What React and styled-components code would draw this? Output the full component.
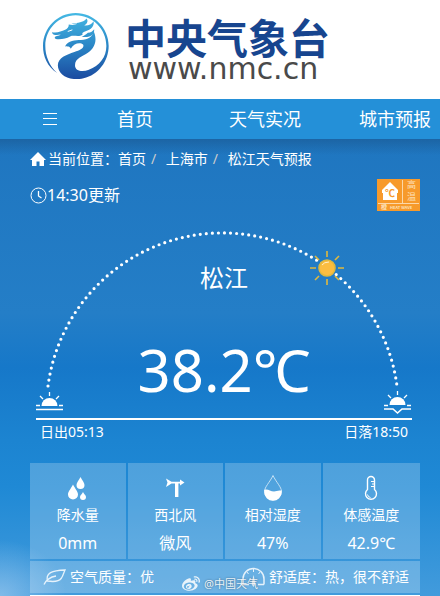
import React from "react";
import styled, { createGlobalStyle } from "styled-components";
import { FaWeibo } from "react-icons/fa";

const crumbs = ["首页", "上海市", "松江天气预报"];
const links = ["首页", "天气实况", "城市预报"];

const stats = [
  { label: "降水量", value: "0mm", icon: <DropsIcon /> },
  { label: "西北风", value: "微风", icon: <VaneIcon /> },
  { label: "相对湿度", value: "47%", icon: <HumidityIcon /> },
  { label: "体感温度", value: "42.9℃", icon: <ThermometerIcon /> },
];

function App() {
  return (
    <Page>
      <GlobalStyle />
      <Header>
        <Brand href="#">
          <DragonLogo />
          <BrandText>
            <BrandName>中央气象台</BrandName>
            <BrandUrl>www.nmc.cn</BrandUrl>
          </BrandText>
        </Brand>
      </Header>
      <Nav>
        <MenuButton type="button" aria-label="菜单">
          <svg width="16" height="12" viewBox="0 0 16 12" stroke="#fff">
            <path d="M1 .5h14M1 5.500h14M1 11.500h14" />
          </svg>
        </MenuButton>
        {links.map((el) => (
          <NavLink key={el} href="#">
            {el}
          </NavLink>
        ))}
      </Nav>
      <Main>
        <Breadcrumb>
          <HomeIcon />
          <span>当前位置：</span>
          {crumbs.map((el) => (
            <Crumb key={el}>
              <a href="#">{el}</a>
            </Crumb>
          ))}
        </Breadcrumb>
        <UpdateRow>
          <Updated>
            <ClockIcon />
            14:30更新
          </Updated>
          <HeatBadge />
        </UpdateRow>
        <SunPanel>
          <SunStage>
            <SunPath />
            <Reading>
              <City>松江</City>
              <Temperature>38.2℃</Temperature>
            </Reading>
          </SunStage>
          <SunTimes>
            <span>日出05:13</span>
            <span>日落18:50</span>
          </SunTimes>
        </SunPanel>
        <Stats>
          {stats.map((el) => (
            <Stat key={el.label}>
              {el.icon}
              <StatLabel>{el.label}</StatLabel>
              <StatValue>{el.value}</StatValue>
            </Stat>
          ))}
        </Stats>
        <Comfort>
          <ComfortItem>
            <LeafIcon />
            空气质量：优
          </ComfortItem>
          <ComfortItem>
            <GaugeIcon />
            舒适度：热，很不舒适
          </ComfortItem>
        </Comfort>
        <NextPanel />
        <Watermark>
          <FaWeibo size={18} />
          @中国天气
        </Watermark>
      </Main>
    </Page>
  );
}

export default App;

function DragonLogo() {
  return (
    <svg width="66" height="66" viewBox="9 8 200 200">
      <defs>
        <linearGradient id="dragon" x1="0" y1="8" x2="0" y2="208" gradientUnits="userSpaceOnUse">
          <stop offset="0" stopColor="#45b9e4" />
          <stop offset=".5" stopColor="#2a86c6" />
          <stop offset="1" stopColor="#1b4ba0" />
        </linearGradient>
      </defs>
      <g fill="url(#dragon)">
        <path d="M52 190C22 170 9 140 9 108C9 53 53 8 108 8s100 45 100 100c0 46-32 88-76 98c-44 10-78-12-78-40c0-22 26-32 50-40c18-6 30-12 27-22c-10-8-28-4-38 12c-3-8-10-5-17-7c10-18 30-18 48-19c22-1 36-10 38-28c12 26 6 50-16 66c-18 12-40 18-40 38c0 18 22 22 42 14c32-12 53-38 53-72c0-51-42-93-93-93s-92 42-92 93c0 30 12 60 36 82z" />
        <path d="M36 66c14 4 28-2 40-7c6-3 12-8 11-16c10 2 18 2 26-3c-6 0-12 0-18-2c20 2 38-2 46-13c6 8 2 16-7 21c12 1 22-2 28-13c4 14-8 26-24 30c-8 3-12 6-9 11c-12 8-26 0-38 5c-12 6-26 10-43 8c-6-3-3-8 3-9c5-1 9-3 12-5c-12 3-26 2-27-7z" />
        <path d="M145 68c9-1 15-5 19-11c1 12-5 19-15 22c-9 3-16 2-23 1c8-3 13-7 19-12z" />
      </g>
      <path d="M84 64l14-5" stroke="#fff" strokeWidth="3" />
    </svg>
  );
}

function HomeIcon() {
  return (
    <svg width="16" height="14" viewBox="0 0 16 14" fill="#fff">
      <path d="M8 0l8 8h-2v6H9.500V9.500H6.500V14H2V8H0z" />
    </svg>
  );
}

function ClockIcon() {
  return (
    <svg width="17" height="17" viewBox="0 0 17 17" fill="none" stroke="#fff">
      <circle cx="8.500" cy="8.500" r="7.500" />
      <path d="M8.500 4v5l3 2" strokeWidth="1.300" />
    </svg>
  );
}

function HeatBadge() {
  return (
    <svg width="43" height="32" viewBox="0 0 43 32" fill="#fff" fontFamily="Noto Sans CJK SC, sans-serif">
      <rect width="43" height="32" fill="#f79a2b" />
      <path d="M13 3L5 11v3h1v7h14v-7h1v-3z" />
      <path d="M25.500 1v23M1 24.500h41" stroke="#fcd7a8" />
      <text x="8" y="18" fontSize="10" fontWeight="700" fill="#f79a2b">℃</text>
      <g fill="#fde0b8">
        <text x="30" y="9" fontSize="9">高</text>
        <text x="30" y="21" fontSize="9">温</text>
        <text x="4" y="30" fontSize="6" fontWeight="700">橙</text>
        <text x="13" y="30" fontSize="4" fontWeight="700">HEAT WAVE</text>
      </g>
    </svg>
  );
}

// dotted path of the sun between sunrise and sunset
function SunPath() {
  return (
    <svg width="100%" viewBox="0 0 376 191" fill="none" stroke="#fff">
      <path
        d="M12 159A176 176 0 0 1 361 159"
        strokeWidth="3.200"
        strokeLinecap="round"
        strokeDasharray="0 6.080"
      />
      <g strokeWidth="1.300">
        <path d="M0 182.500h27M0 178.500h4M23 178.500h4M4 169l3 3M23 169l-3 3M13.500 165v4" />
        <path d="M5.500 179a8 8 0 0 1 16 0z" fill="#fff" stroke="none" />
      </g>
      <g strokeWidth="1.300">
        <path d="M348 178.500h4M371 178.500h4M352 168l3 3M371 168l-3 3M361.500 164v4" />
        <path d="M348 182h9l4.500 4l4.500-4h9" strokeWidth="1.600" />
        <path d="M353.500 178a8 8 0 0 1 16 0z" fill="#fff" stroke="none" />
      </g>
      <g stroke="#e0b83e" strokeWidth="1.600">
        <path d="M291 24v6M291 52v6M274 41h6M302 41h6M279 29l4 4M303 29l-4 4M279 53l4-4M303 53l-4-4" />
        <circle cx="291" cy="41" r="8" fill="#fbbd40" />
        <path d="M286 38q2-3 7-3" stroke="#fff0c8" strokeWidth="1" />
      </g>
    </svg>
  );
}

function DropsIcon() {
  return (
    <svg width="24" height="26" viewBox="0 0 24 26" fill="#fff">
      <path d="M7 9.500C5 13.500 2 16.500 2 19.500a5 5 0 0 0 10 0C12 16.500 9 13.500 7 9.500z" />
      <path d="M14.500 2C13 5 10.500 7.700 10.500 10a4 4 0 0 0 8 0C18.500 7.700 16 5 14.500 2z" />
      <path d="M17 17c-1 2-3 3.500-3 5a3 3 0 0 0 6 0c0-1.500-2-3-3-5z" />
    </svg>
  );
}

function VaneIcon() {
  return (
    <svg width="24" height="26" viewBox="0 0 24 26" fill="#fff">
      <path d="M3 3.500l5.500 3.200H17V4.500l4.500 3l-4.500 3V8.500H8.500L3 12l1.500-4.500z" />
      <path d="M12 8h3.400v14H12z" />
    </svg>
  );
}

function HumidityIcon() {
  return (
    <svg width="24" height="26" viewBox="0 0 24 26">
      <path d="M12 .5C9 7 3.500 12 3.500 16.500a8.500 8.500 0 0 0 17 0C20.500 12 15 7 12 .5z" fill="none" stroke="#c3e0f5" strokeWidth="1" />
      <path d="M3.200 15c4-2 7 3 12.500 1c2-.5 3.500-.5 5-.5v1.500a8.700 8.700 0 0 1-17.500 0z" fill="#fff" />
    </svg>
  );
}

function ThermometerIcon() {
  return (
    <svg width="24" height="26" viewBox="0 0 24 26" fill="none" stroke="#fff">
      <path d="M8.500 14.500V5a3.500 3.500 0 0 1 7 0v9.500a5.500 5.500 0 1 1-7 0z" strokeWidth="1.400" />
      <path d="M12 6.500h3M13 9h2M12 11.500h3M8.500 19.500a3.500 3.500 0 0 0 3 3" />
    </svg>
  );
}

function LeafIcon() {
  return (
    <svg width="23" height="18" viewBox="0 0 23 18" fill="none" stroke="#e6f2fb" strokeWidth="1.300">
      <path d="M1 16.500c2-4 6-7.500 12-8.500" />
      <path d="M4.500 13C2.500 5 9 2.500 22 2c-1.500 3-1.500 5-3.500 8c-2.500 3.500-8 4-14 3z" />
    </svg>
  );
}

function GaugeIcon() {
  return (
    <svg width="23" height="20" viewBox="0 0 23 20" fill="none" stroke="#e6f2fb" strokeWidth="1.500">
      <path d="M1 17.500V12A10.500 10.500 0 0 1 22 12v5.500M1 17.500h6M16 17.500h6" />
      <path d="M11.500 2v3M5 5l1.500 2M18 5l-1.500 2" strokeWidth="1" />
      <path d="M11.500 8L9.500 17l2 3l2-3z" fill="#e6f2fb" stroke="none" />
    </svg>
  );
}

const GlobalStyle = createGlobalStyle`
  * {
    box-sizing: border-box;
  }
  body {
    margin: 0;
    background: #fff;
    font-family: "Noto Sans", "Noto Sans CJK SC", sans-serif;
  }
  a {
    color: inherit;
    text-decoration: none;
  }
  svg {
    display: block;
    flex-shrink: 0;
  }
`;

const Page = styled.div`
  color: #fff;
  font-size: 14px;
  line-height: 20px;
`;

const Header = styled.header`
  padding: 13px 43px 20px;
  background: #fff;
`;

const Brand = styled.a`
  display: flex;
  align-items: flex-start;
  gap: 16px;
`;

const BrandText = styled.div`
  display: flex;
  flex-direction: column;
  padding-top: 4px;
  white-space: nowrap;
`;

const BrandName = styled.h1`
  margin: 0;
  font-size: 41px;
  font-weight: 700;
  line-height: 42px;
  color: #17458f;
`;

const BrandUrl = styled.span`
  padding-left: 3px;
  font-family: "DejaVu Sans", sans-serif;
  font-size: 30px;
  line-height: 20px;
  color: #4a4a4a;
`;

const Nav = styled.nav`
  display: flex;
  align-items: center;
  height: 40px;
  overflow: hidden;
  background: #2490d8;
`;

const MenuButton = styled.button`
  display: flex;
  flex: 0 0 40px;
  justify-content: center;
  margin-left: 30px;
  padding: 0;
  border: 0;
  background: none;
`;

const NavLink = styled.a`
  flex: 1 0 130px;
  text-align: center;
  font-size: 18px;
  line-height: 40px;
`;

const Main = styled.main`
  position: relative;
  padding: 10px 20px 0 30px;
  background:
    linear-gradient(rgba(20, 60, 100, 0.3), rgba(20, 60, 100, 0) 16px),
    radial-gradient(ellipse 66px 56px at 0% 100%, rgba(170, 208, 242, 0.6), transparent),
    linear-gradient(#1f76c0, #247ec7 38%, #1678c9 50%, #1c84d1 66%, #1f89d5 76%, #429bdc);
`;

const Breadcrumb = styled.div`
  display: flex;
  align-items: center;

  svg {
    margin-right: 2px;
  }
`;

const Crumb = styled.span`
  & + &::before {
    content: "/\\00a0";
    padding: 0 6px 0 5px;
    color: #ccc;
  }
`;

const UpdateRow = styled.div`
  display: flex;
  align-items: center;
  justify-content: space-between;
  margin-top: 10px;
`;

const Updated = styled.div`
  display: flex;
  align-items: center;
  font-size: 16px;
`;

const SunPanel = styled.section`
  padding: 16px 8px 0 6px;
`;

const SunStage = styled.div`
  display: grid;
  border-bottom: 2px solid #fff;

  > * {
    grid-area: 1 / 1;
  }
`;

const Reading = styled.div`
  padding-top: 35px;
  text-align: center;
`;

const City = styled.div`
  font-size: 24px;
  line-height: 32px;
`;

const Temperature = styled.div`
  margin-top: 36px;
  font-size: 58px;
  line-height: 80px;
`;

const SunTimes = styled.div`
  display: flex;
  justify-content: space-between;
  padding: 2px 4px 0;
`;

const Stats = styled.section`
  display: grid;
  grid-template-columns: repeat(4, 1fr);
  margin-top: 21px;
`;

const Stat = styled.div`
  display: flex;
  flex-direction: column;
  align-items: center;
  padding: 12px 0 2px;
  border-right: 2px solid transparent;
  background: rgba(255, 255, 255, 0.22) padding-box;

  &:last-child {
    border-right: 0;
  }
`;

const StatLabel = styled.div`
  line-height: 28px;
`;

const StatValue = styled.div`
  font-size: 16px;
  line-height: 28px;
`;

const Comfort = styled.section`
  display: flex;
  justify-content: space-between;
  margin-top: 2px;
  padding: 0 11px 0 13px;
  background: rgba(255, 255, 255, 0.24);
`;

const ComfortItem = styled.div`
  display: flex;
  align-items: center;
  gap: 4px;
  line-height: 32px;
  white-space: nowrap;
`;

const NextPanel = styled.div`
  height: 1px;
  margin-top: 2px;
  background: #fff;
`;

const Watermark = styled.div`
  position: absolute;
  left: 0;
  right: 0;
  bottom: 3px;
  display: flex;
  align-items: center;
  justify-content: center;
  gap: 4px;
  font-size: 11px;
  line-height: 18px;
  text-shadow: 0 0 2px rgba(0, 0, 0, 0.5);
  opacity: 0.85;
  pointer-events: none;
`;
